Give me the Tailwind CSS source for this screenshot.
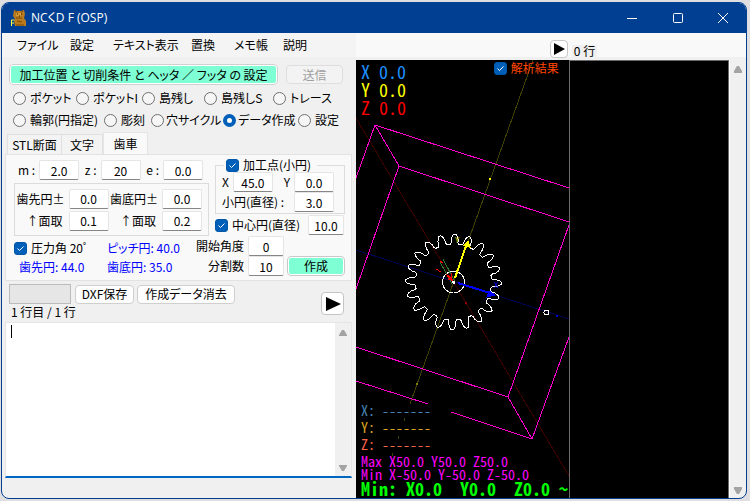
<!DOCTYPE html>
<html lang="ja">
<head>
    <meta charset="UTF-8">
    <meta name="viewport" content="width=device-width, initial-scale=1.0">
    <title>NCくD F (OSP)</title>
    <script src="https://cdn.jsdelivr.net/npm/@tailwindcss/browser@4"></script>
    <style>
        body {
            font-family: 'Liberation Sans Narrow', 'Noto Sans CJK JP', sans-serif;
            font-feature-settings: 'palt';
        }
        .mono {
            font-family: 'Noto Sans CJK JP', monospace;
            font-feature-settings: 'hwid';
        }
        .mono p {
            white-space: pre;
        }
        .num {
            background: #fff;
            border: 1px solid #e5e5e5;
            border-bottom-color: #868686;
            border-radius: 2px;
            height: 20px;
            text-align: center;
        }
        input[type="checkbox"] {
            appearance: none;
            flex-shrink: 0;
            width: 13px;
            height: 13px;
            border-radius: 3px;
            border: 1px solid #0057a8;
            background: #fff;
        }
        input[type="checkbox"]:checked {
            background: #005fb8 url("data:image/svg+xml,%3Csvg xmlns='http://www.w3.org/2000/svg' viewBox='0 0 11 11'%3E%3Cpath d='M2.5 5.5l2 2 4-4' fill='none' stroke='%23fff'/%3E%3C/svg%3E") center no-repeat;
        }
        input[type="radio"] {
            appearance: none;
            flex-shrink: 0;
            width: 13px;
            height: 13px;
            border-radius: 50%;
            border: 1px solid #707070;
            background: #f6f6f6;
        }
        input[type="radio"]:checked {
            border: 4px solid #005fb8;
            background: #fff;
        }
    </style>
</head>
<body class="bg-[#dfdfe2] h-screen flex flex-col pt-[2px] pl-px pr-[3px] pb-[2px] text-xs leading-4 text-black whitespace-nowrap overflow-hidden">

    <div class="flex-1 min-h-0 flex flex-col border border-[#003f92] rounded-lg overflow-hidden bg-[#f0f0f0]">

        <!-- Title bar -->
        <header class="h-[30px] shrink-0 bg-[#003f92] text-white flex items-center pl-2">
            <svg class="w-[18px] h-[18px] shrink-0" viewBox="0 0 18 18">
                <path d="M4 1l3 1h4l3-1 1 4-1 4 2 3v5H5l-1-5 1-2-2-3z" fill="#b87a1c"/>
                <path d="M5 2l2 1M13 2l-2 1M6 9h6M7 12l5 1M6 16h8" stroke="#7a4a08" fill="none"/>
                <path d="M6 4h5v3H6z" fill="#d79a34"/>
                <path d="M7 5h1M11 5h1M9 7h1" stroke="#2a1a00"/>
                <path d="M1.500 17v-6h3M2 14h2" stroke="#ffff40" fill="none"/>
            </svg>
            <h1 class="ml-[3px] font-['Open_Sans','Noto_Sans_CJK_JP',sans-serif] text-xs">NCくD F (OSP)</h1>
            <div class="ml-auto flex h-full">
                <button aria-label="最小化" class="w-[46px] flex items-center justify-center">
                    <svg class="w-3 h-3" viewBox="0 0 12 12"><path d="M1 6.500h10" stroke="#fff"/></svg>
                </button>
                <button aria-label="最大化" class="w-[45px] flex items-center justify-center">
                    <svg class="w-3 h-3" viewBox="0 0 12 12"><rect x="1.500" y="1.500" width="9" height="9" rx="1" fill="none" stroke="#fff"/></svg>
                </button>
                <button aria-label="閉じる" class="w-[46px] flex items-center justify-center">
                    <svg class="w-3 h-3" viewBox="0 0 12 12"><path d="M1 1l10 10M11 1L1 11" stroke="#fff"/></svg>
                </button>
            </div>
        </header>

        <!-- Menu -->
        <div class="h-6 shrink-0 flex bg-[#f9f9f9]">
            <nav class="w-[354px] shrink-0 flex items-center pl-[15px] bg-[#f4f4f4]">
                <button class="w-[53px] text-left">ファイル</button>
                <button class="w-[43px] text-left">設定</button>
                <button class="w-[78px] text-left">テキスト表示</button>
                <button class="w-[43px] text-left">置換</button>
                <button class="w-[49px] text-left">メモ帳</button>
                <button class="text-left">説明</button>
            </nav>
            <div class="flex-[214] flex justify-end items-end">
                <button aria-label="再生" class="relative top-px w-[18px] h-[18px] bg-white border border-[#c8c8c8] rounded-sm flex items-center justify-center">
                    <svg class="w-3 h-3" viewBox="0 0 12 12"><path d="M1 0l11 6-11 6z"/></svg>
                </button>
            </div>
            <div class="flex-[176] flex items-end pl-1"><span class="bg-[#f0f0f0] px-0.5 leading-3">0 行</span></div>
        </div>

        <div class="flex-1 min-h-0 flex">

            <!-- Settings -->
            <main class="w-[354px] shrink-0 flex flex-col pl-[3px] pr-1 pt-[7px] pb-5">
                <div class="flex items-center gap-2 pl-1">
                    <button class="w-[269px] h-[21px] bg-[#7fffd4] border-2 border-white outline outline-[#d0d0d0] -outline-offset-1 rounded leading-4 whitespace-pre">加工位置 と 切削条件 と ヘッタ ／ フッタ の 設定</button>
                    <button disabled class="w-[57px] h-[19px] border border-[#dedede] bg-[#f3f3f3] text-[#a0a0a0] rounded leading-4">送信</button>
                </div>

                <div class="flex flex-col pl-2 pt-0.5">
                    <div class="flex h-[22px] items-center">
                        <label class="w-[63px] flex items-center gap-1"><input type="radio" name="mode">ポケット</label>
                        <label class="w-[66px] flex items-center gap-1"><input type="radio" name="mode">ポケットI</label>
                        <label class="w-[62px] flex items-center gap-1"><input type="radio" name="mode">島残し</label>
                        <label class="w-[69px] flex items-center gap-1"><input type="radio" name="mode">島残しS</label>
                        <label class="flex items-center gap-1"><input type="radio" name="mode">トレース</label>
                    </div>
                    <div class="flex h-[22px] items-center">
                        <label class="w-[91px] flex items-center gap-1"><input type="radio" name="mode">輪郭(円指定)</label>
                        <label class="w-[47px] flex items-center gap-1"><input type="radio" name="mode">彫刻</label>
                        <label class="w-[72px] flex items-center gap-0.5"><input type="radio" name="mode">穴サイクル</label>
                        <label class="w-[75px] flex items-center gap-0.5"><input type="radio" name="mode" checked>データ作成</label>
                        <label class="flex items-center gap-1"><input type="radio" name="mode">設定</label>
                    </div>
                </div>

                <div class="flex items-end pl-0.5 h-[23px]" role="tablist">
                    <button role="tab" class="w-[55px] h-5 border border-b-0 border-[#e0e0e0] bg-[#f3f3f3]">STL断面</button>
                    <button role="tab" class="w-[41px] h-5 border border-b-0 border-l-0 border-[#e0e0e0] bg-[#f3f3f3]">文字</button>
                    <button role="tab" aria-selected="true" class="w-[45px] h-[22px] border border-b-0 border-[#e5e5e5] bg-[#f9f9f9]">歯車</button>
                </div>

                <section class="border border-[#e2e2e2] bg-[#f9f9f9] h-[127px] shrink-0 pl-2 pt-[3px]">
                    <div class="flex gap-[6px]">
                        <div class="w-[195px]">
                            <div class="flex items-center justify-between pl-1 pr-1.5 pt-0.5">
                                <label class="flex items-center gap-1">m :<input type="text" value="2.0" class="num w-10"></label>
                                <label class="flex items-center gap-1">z :<input type="text" value="20" class="num w-10"></label>
                                <label class="flex items-center gap-1">e :<input type="text" value="0.0" class="num w-10"></label>
                            </div>
                            <div class="mt-[3px] h-[53px] border border-[#dcdcdc] grid grid-cols-2 gap-y-[2px] content-center pr-1.5">
                                <label class="flex items-center justify-end gap-1">歯先円±<input type="text" value="0.0" class="num w-10"></label>
                                <label class="flex items-center justify-end gap-1">歯底円±<input type="text" value="0.0" class="num w-10"></label>
                                <label class="flex items-center justify-end gap-1.5">↑面取<input type="text" value="0.1" class="num w-10"></label>
                                <label class="flex items-center justify-end gap-1.5">↑面取<input type="text" value="0.2" class="num w-10"></label>
                            </div>
                        </div>
                        <div class="w-[130px]">
                            <fieldset class="border border-[#dcdcdc] h-[56px] pl-1.5 pr-2.5">
                                <legend class="ml-0.5 px-0.5"><label class="flex items-center gap-1 pr-1 leading-[14px]"><input type="checkbox" checked>加工点(小円)</label></legend>
                                <div class="flex justify-between">
                                    <label class="flex items-center gap-1">X<input type="text" value="45.0" class="num w-10"></label>
                                    <label class="flex items-center gap-1">Y<input type="text" value="0.0" class="num w-10"></label>
                                </div>
                                <label class="flex items-center justify-between">小円(直径) :<input type="text" value="3.0" class="num w-10"></label>
                            </fieldset>
                            <div class="flex items-center justify-between mt-px pr-px">
                                <label class="flex items-center gap-1"><input type="checkbox" checked>中心円(直径)</label>
                                <input type="text" value="10.0" aria-label="中心円(直径)" class="num w-9">
                            </div>
                        </div>
                    </div>
                    <div class="flex">
                        <div class="w-[182px] flex flex-col gap-[3px] pt-1">
                            <div class="flex">
                                <label class="w-[93px] flex items-center gap-1"><input type="checkbox" checked>圧力角 20ﾟ</label>
                                <output class="text-[#0000ff]">ピッチ円: 40.0</output>
                            </div>
                            <div class="flex pl-[5px] text-[#0000ff]">
                                <output class="w-[88px]">歯先円: 44.0</output>
                                <output>歯底円: 35.0</output>
                            </div>
                        </div>
                        <div class="flex flex-col items-end">
                            <label class="flex items-center gap-1">開始角度<input type="text" value="0" class="num w-9"></label>
                            <label class="flex items-center gap-1">分割数<input type="text" value="10" class="num w-9"></label>
                        </div>
                        <button class="self-end ml-[3px] w-[58px] h-5 bg-[#7fffd4] border-2 border-white outline outline-[#c8c8c8] -outline-offset-1 rounded leading-4">作成</button>
                    </div>
                </section>

                <div class="flex items-start pl-1 pr-2 pt-[3px] h-[41px] shrink-0">
                    <div class="flex-1">
                        <div class="flex gap-[3px] items-center">
                            <input type="text" disabled aria-label="進行状況" class="w-[62px] h-5 bg-[#e6e6e6] border border-[#bcbcbc] mr-px">
                            <button class="w-[59px] h-[19px] bg-[#fdfdfd] border border-[#cfcfcf] rounded leading-4">DXF保存</button>
                            <button class="w-[98px] h-[19px] bg-[#fdfdfd] border border-[#cfcfcf] rounded leading-4">作成データ消去</button>
                        </div>
                        <p class="pl-0.5">1 行目 / 1 行</p>
                    </div>
                    <button aria-label="実行" class="mt-2 w-[23px] h-[23px] bg-white border border-[#c4c4c4] rounded flex items-center justify-center">
                        <svg class="w-4 h-4" viewBox="0 0 16 16"><path d="M1 1l15 7-15 7z"/></svg>
                    </button>
                </div>

                <div class="relative flex-1 min-h-0 flex bg-white border border-[#e5e5e5] border-b-2 border-b-[#0067c0]">
                    <textarea aria-label="プログラム" class="flex-1 resize-none outline-none pl-1.5"></textarea>
                    <span class="absolute left-[5px] top-[2px] w-px h-[13px] bg-black"></span>
                    <div class="w-4 bg-[#f0f0f0] flex flex-col justify-between items-center py-1">
                        <svg class="w-2 h-2 mt-0.5" viewBox="0 0 8 8"><path d="M3 1h2l3 5v1H0V6z" fill="#a3a3a3"/></svg>
                        <svg class="w-2 h-2" viewBox="0 0 8 8"><path d="M3 7h2l3-5V1H0v1z" fill="#a3a3a3"/></svg>
                    </div>
                </div>
            </main>

            <!-- 3D preview -->
            <section class="mt-[3px] flex-[214] min-w-0 relative bg-black overflow-hidden">
                <svg class="absolute inset-0 w-full h-full" viewBox="356 60 213 438" preserveAspectRatio="xMinYMin slice" fill="none" shape-rendering="crispEdges">
                    <!-- axes -->
                    <path d="M356 118L569 476" stroke="#3c0000"/>
                    <path d="M533 60L410 404M405 418l-1 3M399 436l-1 3M393 453l-1 3" stroke="#404000"/>
                    <path d="M356 250L569 319" stroke="#000050"/>
                    <!-- stock box -->
                    <g stroke="#ff00cc">
                        <path d="M356 178L375 125L569 188M375 125L399 166L569 222M399 166L356 289"/>
                        <path d="M569 225L508 397L356 347M508 397L532 439L569 337M356 381L428 404M451 412L532 439"/>
                    </g>
                    <path id="gear" stroke="#ffffff"/>
                    <circle cx="453.500" cy="282" r="11" stroke="#ffffff"/>
                    <circle cx="546.500" cy="312.500" r="2.500" stroke="#ffffff"/>
                    <path d="M440 262L452 284M443 259L455 282" stroke="#2e7d32"/>
                    <path d="M440 261l3 2M436 269l5 3M446 274l7 8M448 279l5 1M452 273l-1 8" stroke="#ff0000"/>
                    <path d="M448 276l5 5" stroke="#ff0000" stroke-width="2"/>
                    <path d="M455 278L466 246" stroke="#ffff00" stroke-width="2"/>
                    <path d="M468 240l3 8-8-2z" fill="#ffff00"/>
                    <path d="M458 283L490 293" stroke="#0000ff" stroke-width="2"/>
                    <path d="M495 295l-8 2 2-6z" fill="#0000ff" stroke="#0000ff"/>
                    <path d="M452 281h3v3h-2z" fill="#ffffff"/>
                    <path d="M489 179h2" stroke="#ffff00" stroke-width="2"/>
                    <path d="M416 384h2" stroke="#808000" stroke-width="2"/>
                    <path d="M465 303h2" stroke="#990000" stroke-width="2"/>
                    <path d="M556 316h2" stroke="#0000cc" stroke-width="2"/>
                    <text x="455" y="243" fill="#cccc00" font-size="8">Y</text>
                    <text x="494" y="288" fill="#0000ff" font-size="8">X</text>
                </svg>

                <div class="mono absolute left-[5px] top-0.5 text-lg leading-[18px]">
                    <p class="text-[#1e90ff]">X 0.0</p>
                    <p class="text-[#ffff00]">Y 0.0</p>
                    <p class="text-[#ff0000]">Z 0.0</p>
                </div>

                <label class="absolute right-2.5 top-0 flex items-center gap-1 text-[#ff4500]"><input type="checkbox" checked>解析結果</label>

                <div class="mono absolute inset-x-0 bottom-0 pl-[5px] pb-[3px]">
                    <div class="text-sm leading-[17px]">
                        <p class="text-[#4682b4]">X: -------</p>
                        <p class="text-[#daa520]">Y: -------</p>
                        <p class="text-[#ff6347]">Z: -------</p>
                    </div>
                    <div class="text-sm leading-[13px] pt-0.5 text-[#ff00ff]">
                        <p>Max X50.0 Y50.0 Z50.0</p>
                        <p>Min X-50.0 Y-50.0 Z-50.0</p>
                    </div>
                    <p class="text-lg leading-[14px] font-bold text-[#00ff00]">Min: X0.0  Y0.0  Z0.0 ～</p>
                </div>
            </section>

            <!-- Result list -->
            <section class="mt-[3px] flex-[159] min-w-0 bg-black border border-b-0 border-[#6a6a6a]"></section>
            <div class="mt-[3px] w-[17px] shrink-0 flex flex-col justify-between items-center py-[3px] pt-1.5 border-l border-white">
                <svg class="w-2 h-2" viewBox="0 0 8 8"><path d="M3 0h2l3 5v2H0V5z" fill="#a3a3a3"/></svg>
                <svg class="w-2 h-2" viewBox="0 0 8 8"><path d="M3 7h2l3-5V0H0v2z" fill="#a3a3a3"/></svg>
            </div>
        </div>
    </div>

    <script>
        // gear outline: m=2, z=20, seen at about 2.18 px per mm
        const teeth = 20;
        const cx = 453.5, cy = 282;
        const profile = [[-6.5, 38], [-5, 39.5], [-4.6, 43], [-3, 46], [-1.2, 48], [1.2, 48], [3, 46], [4.6, 43], [5, 39.5], [6.5, 38]];
        const points = [];

        for (let i = 0; i < teeth; i++) {
            for (const [offset, r] of profile) {
                const a = (i * 18 + 1.5 + offset) * Math.PI / 180;
                points.push(`${(cx + r * Math.sin(a)).toFixed(1)} ${(cy - r * Math.cos(a)).toFixed(1)}`);
            }
        }
        document.getElementById('gear').setAttribute('d', `M${points.join('L')}Z`);
    </script>
</body>
</html>
